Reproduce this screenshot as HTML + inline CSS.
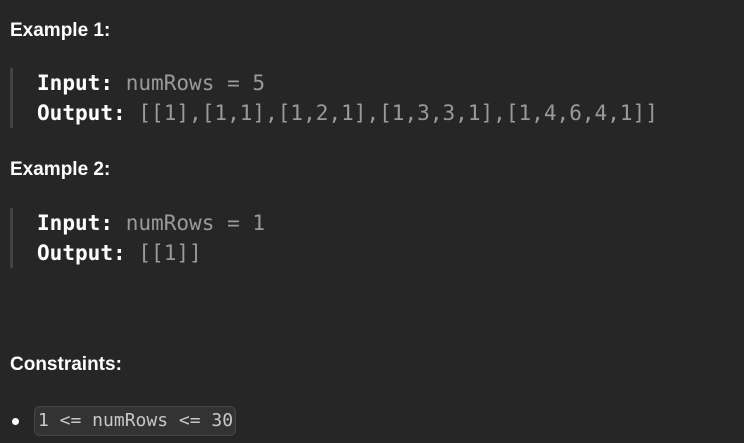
<!DOCTYPE html><html><head><style>
body{margin:0;width:744px;height:443px;background:#262626;color:#fff;overflow:hidden;position:relative;font-family:"Liberation Sans",sans-serif}
.h{position:absolute;left:10px;font-weight:bold;font-size:19px;letter-spacing:0px}
.pre{position:absolute;left:10px;border-left:3px solid #424242;padding-left:24px;font-family:"DejaVu Sans Mono",monospace;font-size:21.05px;line-height:30px;color:#9a9a9a}
.pre b{color:#fff}
.dot{position:absolute;left:12px;top:418px;width:7px;height:7px;border-radius:50%;background:#fff}
.code{position:absolute;left:34px;top:406px;width:202px;height:30px;box-sizing:border-box;border:1px solid #474747;background:#333;border-radius:6px;font-family:"DejaVu Sans Mono",monospace;font-size:18px;line-height:28px;padding-left:3px;color:#c8c8c8;white-space:pre}
</style></head><body>
<div class="h" style="top:20px">Example 1:</div>
<div class="pre" style="top:68px"><b>Input:</b> numRows = 5<br><b>Output:</b> [[1],[1,1],[1,2,1],[1,3,3,1],[1,4,6,4,1]]</div>
<div class="h" style="top:159px">Example 2:</div>
<div class="pre" style="top:208px"><b>Input:</b> numRows = 1<br><b>Output:</b> [[1]]</div>
<div class="h" style="top:354px">Constraints:</div>
<div class="dot"></div>
<div class="code">1 &lt;= numRows &lt;= 30</div>
</body></html>
